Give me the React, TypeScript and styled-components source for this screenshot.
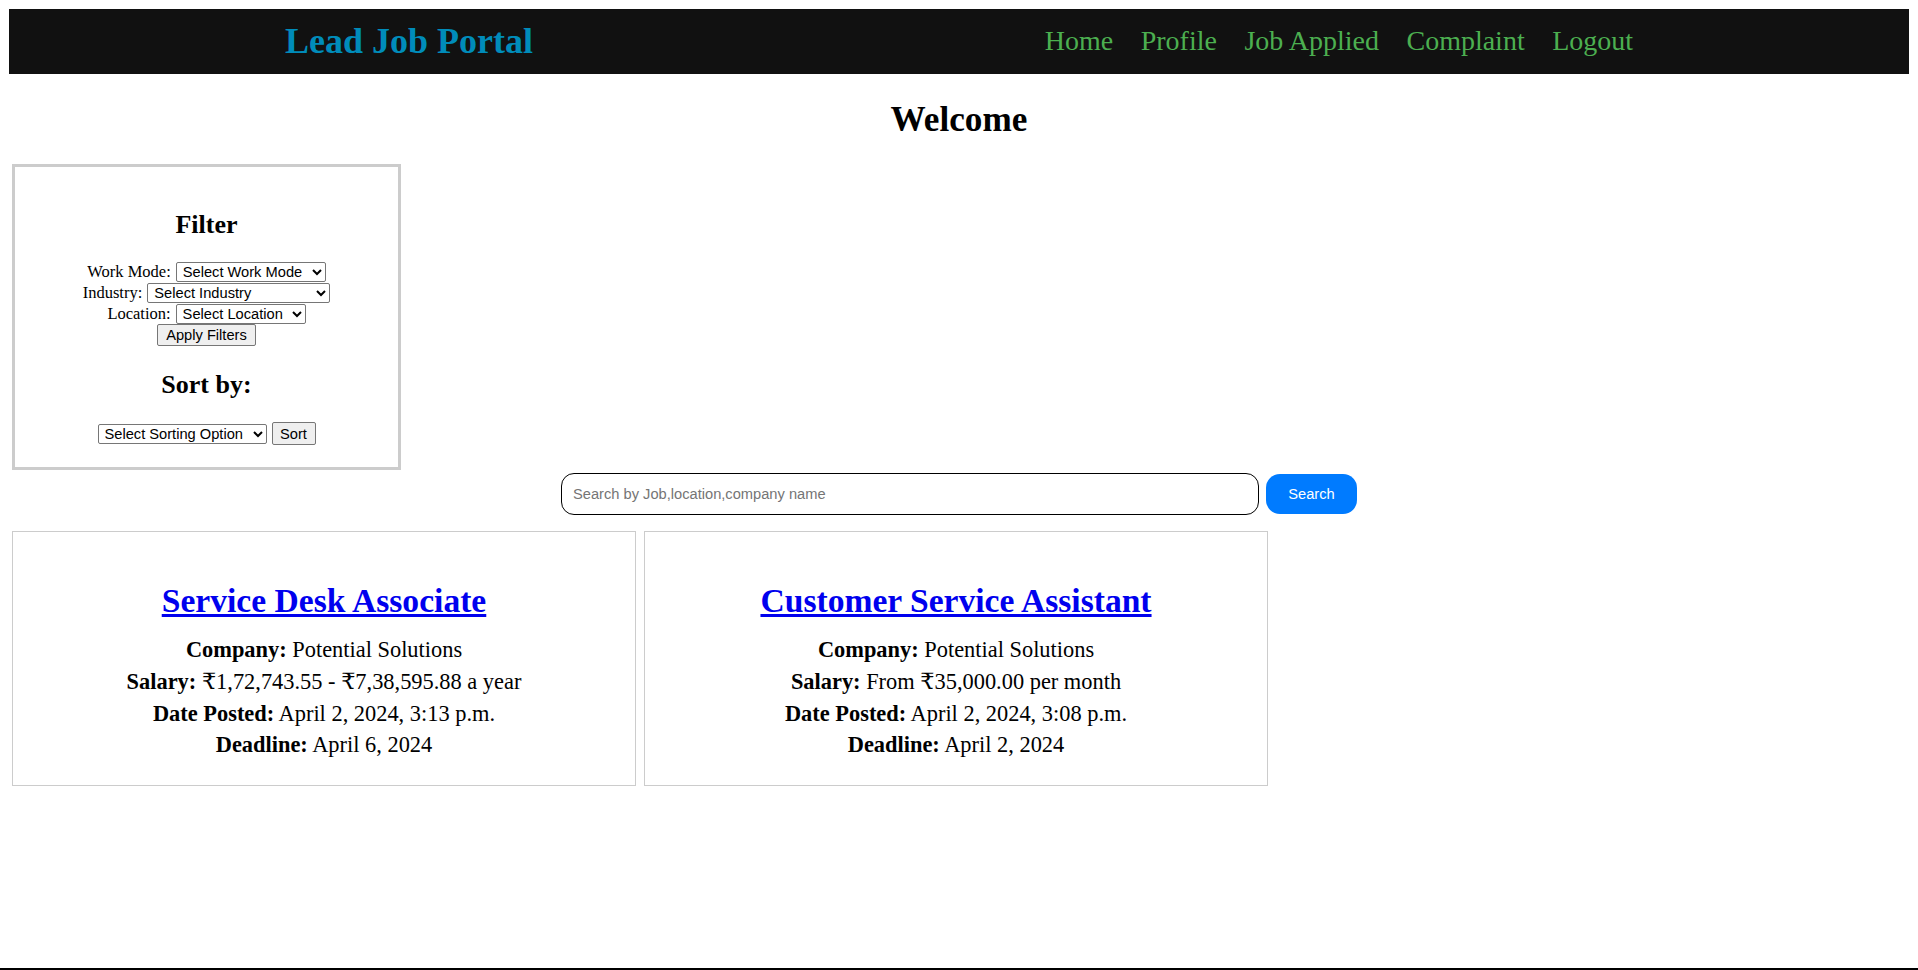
import React from "react";
import styled, { createGlobalStyle } from "styled-components";

const GlobalStyle = createGlobalStyle`
  html, body { background: #ffffff; }
  body {
    margin: 9px;
    font-family: "Liberation Serif", "DejaVu Serif", serif;
    color: #000;
  }
  * { box-sizing: border-box; }
`;

const NavBar = styled.nav`
  height: 65px;
  background: #111111;
  display: flex;
  align-items: center;
  justify-content: space-around;
  padding: 0 20px 1px;
`;

const Logo = styled.div`
  font-family: "Liberation Serif", serif;
  font-weight: bold;
  font-size: 36px;
  color: #008cba;
  white-space: nowrap;
`;

const NavLinks = styled.div`
  display: flex;
  align-items: center;
  gap: 27.5px;
`;

const NavLink = styled.a`
  font-family: "Liberation Serif", serif;
  font-size: 28px;
  color: #4caf50;
  text-decoration: none;
  white-space: nowrap;
`;

const PageTitle = styled.h1`
  margin: 26px 0 24px;
  text-align: center;
  font-size: 35.2px;
  font-weight: bold;
`;

const FilterBox = styled.section`
  width: 389px;
  margin: 0 3px;
  border: 3px solid #cccccc;
  padding: 19px 10px 22px;
  text-align: center;
`;

const BoxHeading = styled.h3<{ $bottom: number }>`
  margin: 24px 0 ${(p) => p.$bottom}px;
  font-size: 26px;
  font-weight: bold;
  line-height: 30px;
`;

const FieldRow = styled.div<{ $h?: number }>`
  display: flex;
  justify-content: center;
  align-items: center;
  gap: 5px;
  height: ${(p) => p.$h ?? 21}px;
`;

const FieldLabel = styled.label`
  font-family: "Liberation Serif", serif;
  font-size: 16.5px;
`;

const Select = styled.select<{ $w: number }>`
  width: ${(p) => p.$w}px;
  height: 20px;
  font-family: "Liberation Sans", Arial, sans-serif;
  font-size: 14.67px;
  color: #000;
  background: #fff;
  border: 1px solid #767676;
  border-radius: 2px;
  padding: 0 0 0 2px;
`;

const PlainButton = styled.button<{ $w: number; $h: number }>`
  width: ${(p) => p.$w}px;
  height: ${(p) => p.$h}px;
  font-family: "Liberation Sans", Arial, sans-serif;
  font-size: 14.67px;
  color: #000;
  background: #efefef;
  border: 1px solid #767676;
  border-radius: 2px;
  padding: 0;
`;

const SearchRow = styled.div`
  display: flex;
  justify-content: center;
  align-items: center;
  gap: 7px;
  margin-top: 3px;
`;

const SearchInput = styled.input`
  width: 698px;
  height: 42px;
  border: 1px solid #000;
  border-radius: 13px;
  padding: 0 11px;
  font-family: "Liberation Sans", Arial, sans-serif;
  font-size: 14.67px;
  outline: none;
  &::placeholder { color: #757575; }
`;

const SearchButton = styled.button`
  width: 91px;
  height: 40px;
  border: none;
  border-radius: 14px;
  background: #007bff;
  color: #fff;
  font-family: "Liberation Sans", Arial, sans-serif;
  font-size: 14.67px;
`;

const CardList = styled.div`
  display: flex;
  gap: 8px;
  padding: 0 3px;
  margin-top: 16px;
`;

const JobCard = styled.article`
  width: 624px;
  border: 1px solid #cccccc;
  padding: 23px 20px 22px;
  text-align: center;
`;

const JobTitle = styled.h2`
  margin: 27px 0 17px;
  font-size: 33.6px;
  font-weight: bold;
`;

const JobLink = styled.a`
  color: #0000ee;
  text-decoration: underline;
`;

const Detail = styled.p`
  margin: 5.3px 0;
  font-size: 22.4px;
`;

const BottomRule = styled.div`
  position: fixed;
  left: 0;
  right: 0;
  bottom: 0;
  height: 2px;
  background: #000;
`;

type Job = {
  title: string;
  company: string;
  salary: string;
  posted: string;
  deadline: string;
};

const jobs: Job[] = [
  {
    title: "Service Desk Associate",
    company: "Potential Solutions",
    salary: "₹1,72,743.55 - ₹7,38,595.88 a year",
    posted: "April 2, 2024, 3:13 p.m.",
    deadline: "April 6, 2024",
  },
  {
    title: "Customer Service Assistant",
    company: "Potential Solutions",
    salary: "From ₹35,000.00 per month",
    posted: "April 2, 2024, 3:08 p.m.",
    deadline: "April 2, 2024",
  },
];

export default function App() {
  return (
    <>
      <GlobalStyle />
      <NavBar>
        <Logo>Lead Job Portal</Logo>
        <NavLinks>
          <NavLink href="#">Home</NavLink>
          <NavLink href="#">Profile</NavLink>
          <NavLink href="#">Job Applied</NavLink>
          <NavLink href="#">Complaint</NavLink>
          <NavLink href="#">Logout</NavLink>
        </NavLinks>
      </NavBar>

      <PageTitle>Welcome</PageTitle>

      <FilterBox>
        <BoxHeading $bottom={21}>Filter</BoxHeading>
        <FieldRow>
          <FieldLabel>Work Mode:</FieldLabel>
          <Select $w={150} defaultValue="">
            <option value="">Select Work Mode</option>
          </Select>
        </FieldRow>
        <FieldRow>
          <FieldLabel>Industry:</FieldLabel>
          <Select $w={183} defaultValue="">
            <option value="">Select Industry</option>
          </Select>
        </FieldRow>
        <FieldRow>
          <FieldLabel>Location:</FieldLabel>
          <Select $w={130} defaultValue="">
            <option value="">Select Location</option>
          </Select>
        </FieldRow>
        <FieldRow $h={22}>
          <PlainButton $w={99} $h={22}>Apply Filters</PlainButton>
        </FieldRow>
        <BoxHeading $bottom={22}>Sort by:</BoxHeading>
        <FieldRow $h={23}>
          <Select $w={169} defaultValue="">
            <option value="">Select Sorting Option</option>
          </Select>
          <PlainButton $w={44} $h={23}>Sort</PlainButton>
        </FieldRow>
      </FilterBox>

      <SearchRow>
        <SearchInput placeholder="Search by Job,location,company name" />
        <SearchButton>Search</SearchButton>
      </SearchRow>

      <CardList>
        {jobs.map((job) => (
          <JobCard key={job.title}>
            <JobTitle>
              <JobLink href="#">{job.title}</JobLink>
            </JobTitle>
            <Detail>
              <strong>Company:</strong> {job.company}
            </Detail>
            <Detail>
              <strong>Salary:</strong> {job.salary}
            </Detail>
            <Detail>
              <strong>Date Posted:</strong> {job.posted}
            </Detail>
            <Detail>
              <strong>Deadline:</strong> {job.deadline}
            </Detail>
          </JobCard>
        ))}
      </CardList>

      <BottomRule />
    </>
  );
}
